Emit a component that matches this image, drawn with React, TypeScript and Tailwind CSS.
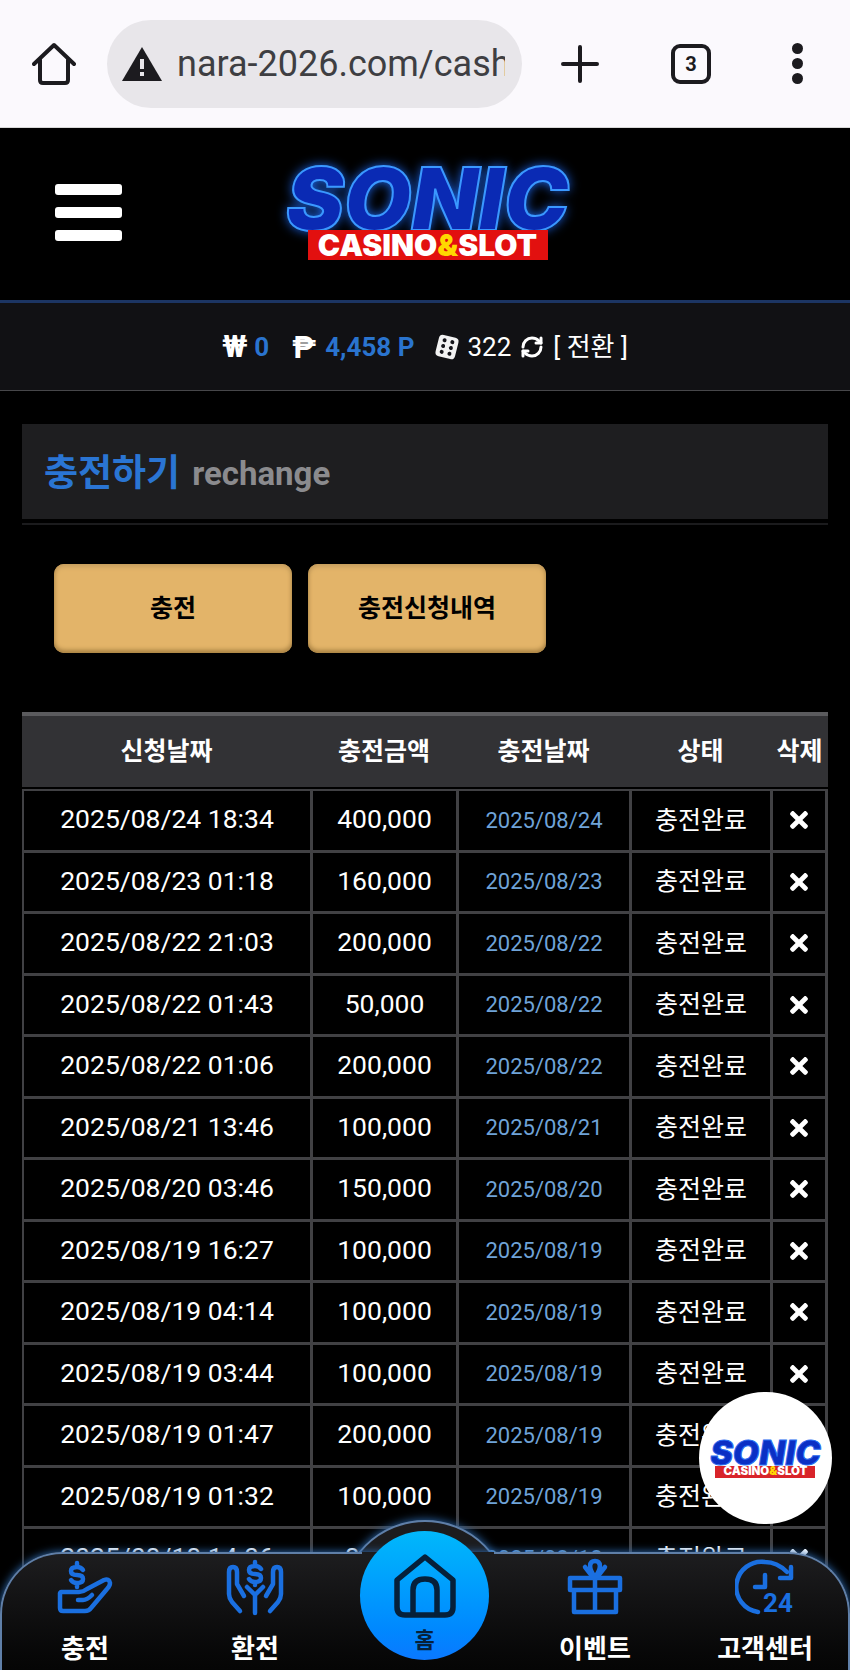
import React from "react";
import { FaTimes } from "react-icons/fa";
import { RefreshCw } from "lucide-react";

const rows: [string, string, string][] = [
  ["2025/08/24 18:34", "400,000", "2025/08/24"],
  ["2025/08/23 01:18", "160,000", "2025/08/23"],
  ["2025/08/22 21:03", "200,000", "2025/08/22"],
  ["2025/08/22 01:43", "50,000", "2025/08/22"],
  ["2025/08/22 01:06", "200,000", "2025/08/22"],
  ["2025/08/21 13:46", "100,000", "2025/08/21"],
  ["2025/08/20 03:46", "150,000", "2025/08/20"],
  ["2025/08/19 16:27", "100,000", "2025/08/19"],
  ["2025/08/19 04:14", "100,000", "2025/08/19"],
  ["2025/08/19 03:44", "100,000", "2025/08/19"],
  ["2025/08/19 01:47", "200,000", "2025/08/19"],
  ["2025/08/19 01:32", "100,000", "2025/08/19"],
  ["2025/08/18 14:06", "80,000", "2025/08/18"],
];

const CELL = "flex items-center justify-center border-r-[3px] border-[#414144]";

function BigLogo() {
  return (
    <div className="flex flex-col items-center [font-family:Inter,sans-serif]">
      <div className="h-[69px] text-[87px] leading-[75px] font-black italic text-[#0a2ab4] [-webkit-text-stroke:2px_#3a98ff] [text-shadow:0_0_12px_#1f6dff]">
        SONIC
      </div>
      <div className="relative h-[30px] w-[240px] bg-[#e2100f] flex items-center justify-center text-[30px] font-black text-white leading-none whitespace-nowrap">
        CASINO<span className="text-[#ffd800]">&amp;</span>SLOT
      </div>
    </div>
  );
}

function SmallLogo() {
  return (
    <div className="flex flex-col items-center [font-family:Inter,sans-serif]">
      <div className="h-[27px] text-[34px] leading-[27px] font-black italic text-[#0b2fc4] [-webkit-text-stroke:1px_#2a6cf0]">
        SONIC
      </div>
      <div className="h-[12px] w-[100px] bg-[#d8242a] flex items-center justify-center text-[11.5px] font-black text-white leading-none whitespace-nowrap">
        CASINO<span className="text-[#ffd800]">&amp;</span>SLOT
      </div>
    </div>
  );
}

function ChargeIcon() {
  return (
    <svg width="60" height="60" viewBox="0 0 60 60" fill="none" stroke="#1a6fe0" strokeWidth="4.5" strokeLinecap="round" strokeLinejoin="round">
      <path d="M6 34H24Q28 34 32 31L49 22Q54 20 55 25Q55 28 52 31L36 50Q34 53 30 53H8Q5 53 5 50V35" />
      <path d="M23 42H28Q32 42 37 37" />
      <path d="M28 12Q26 9 22 9Q16 9 16 13Q16 17 22 17Q28 17 28 21Q28 25 22 25Q18 25 16 22M22 5V9M22 25V29" />
    </svg>
  );
}

function ExchangeIcon() {
  return (
    <svg width="60" height="60" viewBox="0 0 60 60" fill="none" stroke="#1a6fe0" strokeWidth="4.5" strokeLinecap="round" strokeLinejoin="round">
      <path d="M15 53L7 44Q4 40 4 36V14Q4 9 8 9Q12 9 12 14V26L19 38" />
      <path d="M45 53L53 44Q56 40 56 36V14Q56 9 52 9Q48 9 48 14V26L41 38" />
      <path d="M30 55V37L38 29M30 37L22 29" />
      <path d="M36 11Q34 8 30 8Q24 8 24 12Q24 16 30 16Q36 16 36 20Q36 24 30 24Q26 24 24 21M30 4V8M30 24V27" />
    </svg>
  );
}

function GiftIcon() {
  return (
    <svg width="60" height="60" viewBox="0 0 60 60" fill="none" stroke="#1a6fe0" strokeWidth="4.5" strokeLinecap="round" strokeLinejoin="round">
      <path d="M5 20H55V32H5ZM9 32V54H51V32M30 20V54" />
      <path d="M30 19C23 10 24 3 30 3C36 3 37 10 30 19M20 9L27 18M40 9L33 18" />
    </svg>
  );
}

function SupportIcon() {
  return (
    <svg width="60" height="60" viewBox="0 0 60 60" fill="none" stroke="#1a6fe0" strokeWidth="4.5" strokeLinecap="round" strokeLinejoin="round">
      <path d="M23 54A25 25 0 0 1 30 4Q42 4 52 14" />
      <path d="M45 20H56V9" />
      <path d="M30 17V29H20" />
      <text x="28" y="54" fontSize="26" fontWeight="700" fill="#1a6fe0" stroke="none" className="[font-family:Roboto,sans-serif]">24</text>
    </svg>
  );
}

function HomeIcon() {
  return (
    <svg width="68" height="68" viewBox="0 0 68 68" fill="none" stroke="#06203a" strokeWidth="5.5" strokeLinecap="round" strokeLinejoin="round">
      <path d="M34 5L6 28V55Q6 63 14 63H54Q62 63 62 55V28Z" />
      <path d="M22 62V38Q22 27 34 27Q46 27 46 38V62" />
    </svg>
  );
}

function Dice() {
  return (
    <svg width="24" height="24" viewBox="0 0 24 24" className="rotate-[14deg]">
      <rect x="2" y="1" width="20" height="22" rx="4" fill="#f2f2f2" />
      <g fill="#15151a">
        <circle cx="8" cy="6" r="2" />
        <circle cx="8" cy="12" r="2" />
        <circle cx="8" cy="18" r="2" />
        <circle cx="16" cy="6" r="2" />
        <circle cx="16" cy="12" r="2" />
        <circle cx="16" cy="18" r="2" />
      </g>
    </svg>
  );
}

function NavItem({ icon, label }: { icon: React.ReactNode; label: string }) {
  return (
    <div className="w-[170px] flex flex-col items-center">
      <div className="h-[60px] mt-[4px]">{icon}</div>
      <div className="mt-[14px] text-[26px] font-bold text-white leading-[34px]">{label}</div>
    </div>
  );
}

export default function App() {
  return (
    <div className="relative w-[850px] h-[1670px] overflow-hidden bg-black [font-family:Roboto,'Noto_Sans_CJK_KR',sans-serif]">
      {/* Browser bar */}
      <div className="h-[128px] bg-[#fbf9fd] border-b border-[#d8d8d8] flex items-center">
        <div className="w-[107px] flex justify-center">
          <svg width="44" height="44" viewBox="0 0 44 44" fill="none" stroke="#1c1b1f" strokeWidth="4" strokeLinejoin="round" strokeLinecap="round">
            <path d="M2 22L22 3L42 22" />
            <path d="M8 18V38Q8 41 11 41H33Q36 41 36 38V18" />
          </svg>
        </div>
        <div className="w-[415px] h-[88px] rounded-[44px] bg-[#e8e6ea] flex items-center pl-[14px] pr-[17px] gap-[14px]">
          <svg width="42" height="36" viewBox="0 0 42 36" className="shrink-0">
            <path d="M21 1L41 35H1Z" fill="#1c1b1f" />
            <rect x="19" y="13" width="4" height="10" fill="#e8e6ea" />
            <rect x="19" y="26" width="4" height="4" fill="#e8e6ea" />
          </svg>
          <div className="overflow-hidden whitespace-nowrap text-[36px] text-[#3e3e42] leading-none">nara-2026.com/cash</div>
        </div>
        <div className="w-[116px] flex justify-center">
          <svg width="38" height="38" viewBox="0 0 38 38" stroke="#1c1b1f" strokeWidth="4" strokeLinecap="round">
            <path d="M19 2V36M2 19H36" />
          </svg>
        </div>
        <div className="w-[106px] flex justify-center">
          <div className="w-[40px] h-[40px] rounded-[9px] border-[4px] border-[#1c1b1f] flex items-center justify-center text-[20px] font-bold text-[#1c1b1f] leading-none">3</div>
        </div>
        <div className="flex-1 flex flex-col items-center gap-[4px]">
          <div className="w-[11px] h-[11px] rounded-full bg-[#1c1b1f]" />
          <div className="w-[11px] h-[11px] rounded-full bg-[#1c1b1f]" />
          <div className="w-[11px] h-[11px] rounded-full bg-[#1c1b1f]" />
        </div>
      </div>

      {/* Site header */}
      <div className="relative h-[175px] bg-black border-b-[3px] border-[#1c3563] flex">
        <div className="w-[285px] pl-[55px] pt-[56px] flex flex-col gap-[12px]">
          <div className="w-[67px] h-[11px] bg-white rounded-[3px]" />
          <div className="w-[67px] h-[11px] bg-white rounded-[3px]" />
          <div className="w-[67px] h-[11px] bg-white rounded-[3px]" />
        </div>
        <div className="pt-[33px] w-[285px]">
          <BigLogo />
        </div>
      </div>

      {/* Balance bar */}
      <div className="h-[88px] bg-[#111114] border-b border-[#47474a] flex items-center justify-center text-[26px] text-white leading-none">
        <span className="font-bold text-[31px] mr-[7px]">₩</span>
        <span className="font-bold text-[#2a74cf] mr-[23px]">0</span>
        <span className="font-bold text-[32px] mr-[9px]">₱</span>
        <span className="font-bold text-[#2a74cf] mr-[21px]">4,458 P</span>
        <span className="mr-[8px] flex"><Dice /></span>
        <span className="mr-[9px]">322</span>
        <RefreshCw size={24} strokeWidth={3} className="mr-[9px]" />
        <span>[ 전환 ]</span>
      </div>

      {/* Main */}
      <div className="px-[22px] pt-[33px]">
        <div className="h-[95px] bg-[#1e1e20] flex items-center pl-[22px] pt-[4px] gap-[12px]">
          <span className="text-[37px] font-bold text-[#2a75d3] leading-none">충전하기</span>
          <span className="text-[33px] font-bold text-[#8b8b8e] leading-none">rechange</span>
        </div>
        <div className="mt-[4px] h-[2px] bg-[#1b1b1d]" />

        <div className="pl-[32px] pt-[39px] flex gap-[16px]">
          <div className="w-[238px] h-[89px] rounded-[10px] bg-[#e3b469] shadow-[inset_0_-3px_4px_#a98243,inset_0_3px_4px_#c79f60] flex items-center justify-center text-[25px] font-bold text-black">충전</div>
          <div className="w-[238px] h-[89px] rounded-[10px] bg-[#e3b469] shadow-[inset_0_-3px_4px_#a98243,inset_0_3px_4px_#c79f60] flex items-center justify-center text-[25px] font-bold text-black">충전신청내역</div>
        </div>

        {/* Table */}
        <div className="mt-[59px]">
          <div className="grid grid-cols-[289px_146px_173px_141px_57px] h-[75px] bg-[#323235] border-t-[4px] border-[#5b5b5e] text-[25px] font-bold text-white mb-[2px]">
            <div className="flex items-center justify-center">신청날짜</div>
            <div className="flex items-center justify-center">충전금액</div>
            <div className="flex items-center justify-center">충전날짜</div>
            <div className="flex items-center justify-center">상태</div>
            <div className="flex items-center justify-center">삭제</div>
          </div>
          <div className="border-t-[2px] border-[#414144]">
            {rows.map((r) => (
              <div key={r[0]} className="grid grid-cols-[291px_146px_173px_141px_55px] h-[61.5px] border-b-[3px] border-[#414144] text-[26.5px] text-white">
                <div className={`${CELL} border-l-[2px] pb-[2px]`}>{r[0]}</div>
                <div className={`${CELL} pb-[2px]`}>{r[1]}</div>
                <div className={`${CELL} text-[22px] text-[#6fa3d8]`}>{r[2]}</div>
                <div className={`${CELL} text-[25px]`}>충전완료</div>
                <div className={CELL}><FaTimes size={26} /></div>
              </div>
            ))}
          </div>
        </div>
      </div>

      {/* Floating logo */}
      <div className="absolute left-[699px] top-[1392px] w-[133px] h-[132px] rounded-full bg-white flex items-center justify-center">
        <SmallLogo />
      </div>

      {/* Bottom nav */}
      <div className="absolute left-[340px] top-[1520px] w-[170px] h-[170px] rounded-full bg-[#1c1c1e] border-[2px] border-[#5f7fa8] shadow-[0_0_10px_#2f6fb8]" />
      <div className="absolute left-0 top-[1552px] w-[850px] h-[118px] rounded-t-[62px] bg-gradient-to-b from-[#1d1d1f] to-[#050505] border-t-[2px] border-x-[2px] border-[#5f7fa8] shadow-[0_0_8px_#2f6fb8]">
        <div className="absolute left-[360px] -top-[2px] w-[132px] h-[4px] bg-[#1c1c1e]" />
        <div className="flex -mx-[2px]">
          <NavItem icon={<ChargeIcon />} label="충전" />
          <NavItem icon={<ExchangeIcon />} label="환전" />
          <div className="w-[170px]" />
          <NavItem icon={<GiftIcon />} label="이벤트" />
          <NavItem icon={<SupportIcon />} label="고객센터" />
        </div>
      </div>
      <div className="absolute left-[360px] top-[1531px] w-[129px] h-[129px] rounded-full bg-gradient-to-b from-[#03b8fb] to-[#0b78ff] flex flex-col items-center pt-[21px]">
        <HomeIcon />
        <div className="mt-[7px] text-[22px] font-bold text-[#06203a] leading-[28px]">홈</div>
      </div>
    </div>
  );
}
